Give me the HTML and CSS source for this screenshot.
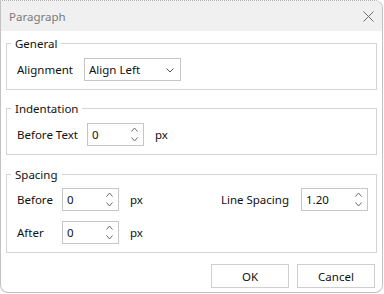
FILE: index.html
```html
<!DOCTYPE html>
<html>
<head>
<meta charset="utf-8">
<link rel="stylesheet" href="styles.css">
</head>
<body>
<div class="window">
  <div class="titlebar">
    <span class="title">Paragraph</span>
    <svg class="close" width="11" height="11" viewBox="0 0 11 11"><path d="M0.5 0.5 L10.5 10.5 M10.5 0.5 L0.5 10.5" stroke="#6e6e6e" stroke-width="1" fill="none"/></svg>
  </div>
  <div class="content">
    <fieldset class="group general">
      <legend>General</legend>
      <div class="row">
        <span class="lbl lbl-align">Alignment</span>
        <div class="select">
          <span>Align Left</span>
          <svg class="chev" width="8" height="5" viewBox="0 0 8 5"><path d="M0.5 0.5 L4 4 L7.5 0.5" stroke="#555" fill="none"/></svg>
        </div>
      </div>
    </fieldset>
    <fieldset class="group indent">
      <legend>Indentation</legend>
      <div class="row">
        <span class="lbl lbl-btext">Before Text</span>
        <div class="spin"><span class="val">0</span><span class="arrows"><svg width="7" height="5" viewBox="0 0 7 5"><path d="M0.5 4.5 L3.5 1 L6.5 4.5" stroke="#6a6a6a" fill="none"/></svg><svg width="7" height="5" viewBox="0 0 7 5"><path d="M0.5 0.5 L3.5 4 L6.5 0.5" stroke="#6a6a6a" fill="none"/></svg></span></div>
        <span class="unit">px</span>
      </div>
    </fieldset>
    <fieldset class="group spacing">
      <legend>Spacing</legend>
      <div class="sp-grid">
        <span class="lbl">Before</span>
        <div class="spin"><span class="val">0</span><span class="arrows"><svg width="7" height="5" viewBox="0 0 7 5"><path d="M0.5 4.5 L3.5 1 L6.5 4.5" stroke="#6a6a6a" fill="none"/></svg><svg width="7" height="5" viewBox="0 0 7 5"><path d="M0.5 0.5 L3.5 4 L6.5 0.5" stroke="#6a6a6a" fill="none"/></svg></span></div>
        <span class="unit">px</span>
        <span class="lbl ls-label">Line Spacing</span>
        <div class="spin wide"><span class="val">1.20</span><span class="arrows"><svg width="7" height="5" viewBox="0 0 7 5"><path d="M0.5 4.5 L3.5 1 L6.5 4.5" stroke="#6a6a6a" fill="none"/></svg><svg width="7" height="5" viewBox="0 0 7 5"><path d="M0.5 0.5 L3.5 4 L6.5 0.5" stroke="#6a6a6a" fill="none"/></svg></span></div>
        <span class="lbl row2">After</span>
        <div class="spin"><span class="val">0</span><span class="arrows"><svg width="7" height="5" viewBox="0 0 7 5"><path d="M0.5 4.5 L3.5 1 L6.5 4.5" stroke="#6a6a6a" fill="none"/></svg><svg width="7" height="5" viewBox="0 0 7 5"><path d="M0.5 0.5 L3.5 4 L6.5 0.5" stroke="#6a6a6a" fill="none"/></svg></span></div>
        <span class="unit">px</span>
      </div>
    </fieldset>
    <div class="buttons">
      <button class="btn">OK</button>
      <button class="btn">Cancel</button>
    </div>
  </div>
</div>
</body>
</html>
```
FILE: styles.css
```css
* { box-sizing: border-box; }
body {
  margin: 0;
  background: #ffffff;
  font-family: "Noto Sans", "Open Sans", sans-serif;
  font-size: 11.5px;
  color: #111111;
}
.window {
  width: 383px;
  height: 293px;
  border: 1px solid #c2c2c2;
  border-top: 1px dotted #a8a8a8;
  border-radius: 0 8px 8px 8px;
  overflow: hidden;
  background: #ffffff;
}
.titlebar {
  height: 30px;
  background: #f0f0f0;
  display: flex;
  align-items: center;
  justify-content: space-between;
  padding: 0 8px 0 8px;
}
.title {
  color: #7a7a7a;
  font-size: 11.5px;
  line-height: 15px;
  margin-top: 1px;
}
.close { display: block; }
.content {
  padding: 5px 5px 0 5px;
}
.group {
  margin: 0;
  border: 1px solid #d4d4d4;
  padding: 7px 8px 8px 10px;
  min-width: 0;
}
.group legend {
  padding: 0 4px 0 4px;
  margin-left: -6px;
  line-height: 15px;
  color: #111;
}
.indent { margin-top: 11px; }
.spacing { margin-top: 12px; padding-top: 6px; }
.row {
  display: flex;
  align-items: center;
}
.lbl { line-height: 15px; }
.lbl-align { width: 67px; }
.lbl-btext { width: 70px; }
.select {
  width: 97px;
  height: 23px;
  border: 1px solid #c6c6c6;
  display: flex;
  align-items: center;
  justify-content: space-between;
  padding: 0 6px 0 4px;
}
.chev { display: block; margin-top: 1px; }
.spin {
  width: 57px;
  height: 23px;
  border: 1px solid #c6c6c6;
  display: flex;
  align-items: center;
  justify-content: space-between;
  padding: 0 5px 0 4px;
}
.spin.wide { width: 67px; }
.arrows {
  display: flex;
  flex-direction: column;
  justify-content: space-between;
  height: 15px;
}
.arrows svg { display: block; }
.unit { margin-left: 11px; }
.sp-grid {
  display: grid;
  grid-template-columns: 45px 57px auto 1fr auto 67px;
  align-items: center;
  row-gap: 10px;
}
.ls-label { grid-column: 5; justify-self: end; margin-right: 12px; }
.row2 { grid-column: 1; }
.buttons {
  display: flex;
  justify-content: flex-end;
  gap: 8px;
  margin-top: 11px;
  padding-right: 2px;
}
.btn {
  width: 78px;
  height: 24px;
  border: 1px solid #cfcfcf;
  background: #ffffff;
  font-family: inherit;
  font-size: 11.5px;
  color: #111;
  padding: 0;
}
```
